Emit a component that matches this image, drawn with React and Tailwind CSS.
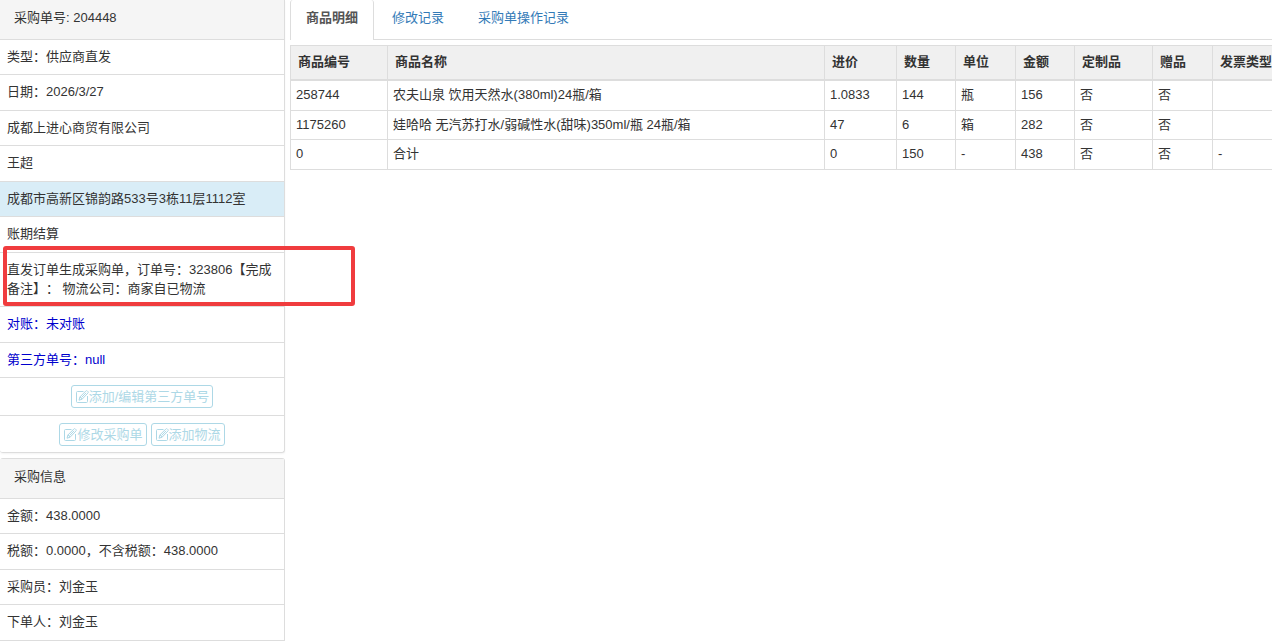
import React, { useState } from 'react';

const TABS = ['商品明细', '修改记录', '采购单操作记录'];

const COLUMNS = [
  { key: 'code', label: '商品编号', width: 'w-[97px]' },
  { key: 'name', label: '商品名称', width: '' },
  { key: 'price', label: '进价', width: 'w-[72px]' },
  { key: 'qty', label: '数量', width: 'w-[59px]' },
  { key: 'unit', label: '单位', width: 'w-[60px]' },
  { key: 'amount', label: '金额', width: 'w-[59px]' },
  { key: 'custom', label: '定制品', width: 'w-[78px]' },
  { key: 'gift', label: '赠品', width: 'w-[60px]' },
  { key: 'invoice', label: '发票类型', width: 'w-[70px]' },
];

const ITEMS = [
  { code: '258744', name: '农夫山泉 饮用天然水(380ml)24瓶/箱', price: '1.0833', qty: '144', unit: '瓶', amount: '156', custom: '否', gift: '否', invoice: '' },
  { code: '1175260', name: '娃哈哈 无汽苏打水/弱碱性水(甜味)350ml/瓶 24瓶/箱', price: '47', qty: '6', unit: '箱', amount: '282', custom: '否', gift: '否', invoice: '' },
  { code: '0', name: '合计', price: '0', qty: '150', unit: '-', amount: '438', custom: '否', gift: '否', invoice: '-' },
];

const EditIcon = () => (
  <svg className="size-[13px] shrink-0" viewBox="0 0 13 13" fill="none" stroke="currentColor" aria-hidden="true">
    <path d="M7.5 1.5H1.5a1 1 0 0 0-1 1v9a1 1 0 0 0 1 1h9a1 1 0 0 0 1-1V6" />
    <path d="M3 10.2l.9-3.2L9.8 1c.5-.5 1.1-.5 1.6 0l.5.5c.5.5.5 1.1 0 1.6L6.1 9.2z" />
    <path d="M3.9 7l2.2 2.2M5.5 7.6l4.6-4.8" />
  </svg>
);

const ActionButton = ({ children }) => (
  <button type="button" className="inline-flex h-[23px] items-center rounded-[3px] border border-[#add8e6] bg-white pr-[3px] pl-1 text-[#add8e6] hover:bg-sky-50">
    <EditIcon />
    {children}
  </button>
);

const Panel = ({ title, className = '', children }) => (
  <section className={`border-r border-b border-[#ddd] ${className}`}>
    <h2 className="border-b border-[#ddd] bg-[#f5f5f5] pt-2 pb-[11px] pl-[14px] leading-5">{title}</h2>
    <ul>{children}</ul>
  </section>
);

const Row = ({ className = '', children }) => (
  <li className={`border-b border-[#ddd] px-[7px] pt-[7px] pb-2 leading-[19px] last:border-b-0 even:pb-[9px] ${className}`}>
    {children}
  </li>
);

const Sidebar = () => (
  <aside className="w-[285px] shrink-0">
    <Panel title="采购单号: 204448" className="rounded-b-[3px] shadow-xs">
      <Row>类型：供应商直发</Row>
      <Row>日期：2026/3/27</Row>
      <Row>成都上进心商贸有限公司</Row>
      <Row>王超</Row>
      <Row className="bg-[#d9edf7]">成都市高新区锦韵路533号3栋11层1112室</Row>
      <Row>账期结算</Row>
      <Row className="relative">
        直发订单生成采购单，订单号：323806【完成备注】： 物流公司：商家自已物流
        <div className="pointer-events-none absolute -top-[7px] bottom-0 left-[3px] z-10 w-[352px] rounded-[3px] border-4 border-[#f03c3e]" />
      </Row>
      <Row className="text-[#0000cd]">对账：未对账</Row>
      <Row className="text-[#0000cd]">第三方单号：null</Row>
      <li className="flex justify-center border-b border-[#ddd] py-[7px]">
        <ActionButton>添加/编辑第三方单号</ActionButton>
      </li>
      <li className="flex justify-center gap-1 pt-[7px] pb-[6px]">
        <ActionButton>修改采购单</ActionButton>
        <ActionButton>添加物流</ActionButton>
      </li>
    </Panel>

    <Panel title="采购信息" className="mt-[5px] rounded-t-[3px] border-t">
      <Row>金额：438.0000</Row>
      <Row>税额：0.0000，不含税额：438.0000</Row>
      <Row>采购员：刘金玉</Row>
      <Row>下单人：刘金玉</Row>
    </Panel>
  </aside>
);

const ItemTable = () => (
  <div className="mt-[5px] overflow-hidden">
    <table className="w-full min-w-[993px] table-fixed border-separate border-spacing-0 border-t border-l border-[#ddd]">
      <thead>
        <tr className="bg-[#f0f0f0]">
          {COLUMNS.map(c => (
            <th key={c.key} className={`border-r border-b-2 border-[#ddd] px-[7px] pt-[6px] pb-2 text-left leading-[19px] font-bold whitespace-nowrap ${c.width}`}>
              {c.label}
            </th>
          ))}
        </tr>
      </thead>
      <tbody>
        {ITEMS.map(item => (
          <tr key={item.code} className="h-[30px] even:h-[29px]">
            {COLUMNS.map(c => (
              <td key={c.key} className="border-r border-b border-[#ddd] px-[5px] pb-[2px] leading-[19px]">{item[c.key]}</td>
            ))}
          </tr>
        ))}
      </tbody>
    </table>
  </div>
);

const App = () => {
  const [active, setActive] = useState(0);

  return (
    <div className="flex items-start gap-[5px] bg-white font-['Liberation_Sans','Noto_Sans_CJK_SC',sans-serif] text-[13px] text-[#333] [text-spacing-trim:space-all]">
      <Sidebar />
      <main className="min-w-0 flex-1">
        <div role="tablist" className="flex border-b border-[#ddd]">
          {TABS.map((tab, i) => (
            <button
              key={tab}
              type="button"
              role="tab"
              aria-selected={i === active}
              onClick={() => setActive(i)}
              className={i === active
                ? '-mb-px mr-px rounded-t-[3px] border-x border-[#ddd] bg-white px-[15px] pt-[8px] pb-3 leading-5 font-bold text-[#555]'
                : 'px-[17px] pt-[8px] pb-[11px] leading-5 text-[#337ab7]'}
            >
              {tab}
            </button>
          ))}
        </div>
        <ItemTable />
      </main>
    </div>
  );
};

export default App;
